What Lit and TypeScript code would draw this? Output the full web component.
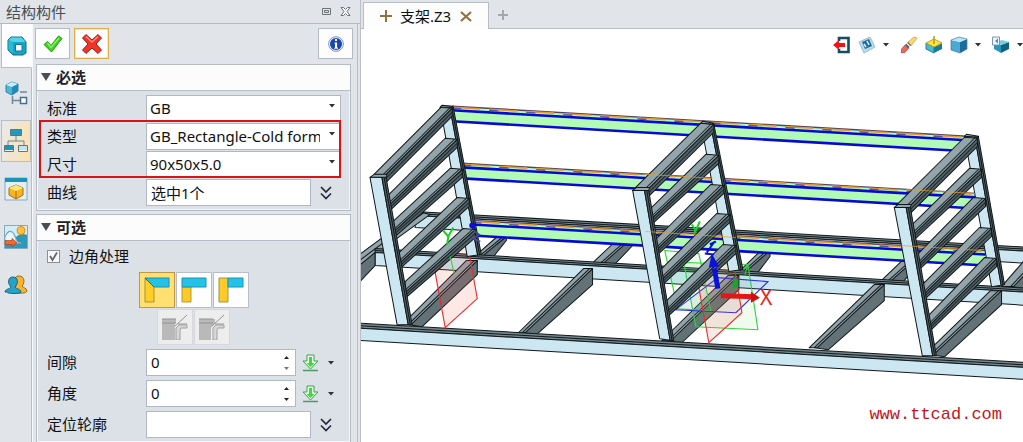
import { LitElement, html, css, svg } from "lit";
import { customElement, property, state } from "lit/decorators.js";
import { classMap } from "lit/directives/class-map.js";

type Pt = [number, number];

const pts = (list: Pt[]) => list.map((p) => p.join(",")).join(" ");
const mix = (a: Pt, b: Pt, t: number): Pt => [a[0] + (b[0] - a[0]) * t, a[1] + (b[1] - a[1]) * t];
const drop = (p: Pt, dy: number): Pt => [p[0], p[1] + dy];

/* ---------- icons ---------- */

const caret = html`<svg class="caret" width="6" height="4" viewBox="0 0 6 4"><path d="M0 0h6L3 3.5z" fill="#333" /></svg>`;
const triangle = html`<svg width="10" height="8" viewBox="0 0 10 8"><path d="M0 0h10L5 8z" fill="#4a4e54" /></svg>`;
const expand = html`<svg width="12" height="14" viewBox="0 0 12 14" fill="none" stroke="#222a38" stroke-width="1.7"><path d="M1 1l5 5 5-5M1 7.500l5 5 5-5" /></svg>`;

const railIcons = [
  html`<svg width="22" height="22" viewBox="0 0 22 22"><path d="M2 5l3-3h11l4 5v11l-3 2H7l-5-5z" fill="#16a3c4" stroke="#0b6f8e" stroke-linejoin="round" /><path d="M2.500 5l3-2.500h10L19.500 7H7z" fill="#57d3e8" /><path d="M2.500 5L7 7v12l-4.500-4.500z" fill="#2fb9d8" /><path d="M9.500 9.500h6.500v6.500H9.500z" fill="#fff" stroke="#0c7896" /></svg>`,
  html`<svg width="24" height="26" viewBox="0 0 24 26"><path d="M2 5l6-3 6 2v7l-6 4-6-3z" fill="#4eb5da" stroke="#3583a8" /><path d="M2 5l6-3 6 2-6 3z" fill="#c5eefa" /><path d="M8 7l6-3v7l-6 4z" fill="#2589b5" /><path d="M16 12h7M8.500 16v8M8.500 20.500h8" stroke="#71889b" stroke-width="1.500" fill="none" /><path d="M16.500 17.500h6v6h-6z" fill="#fff" stroke="#44718e" stroke-width="1.500" /></svg>`,
  html`<svg width="26" height="26" viewBox="0 0 26 26"><path d="M13 8v5M5 18v-5h16v5" stroke="#6d8394" fill="none" /><path d="M7.500 1.500h11v6h-11z" fill="#2797bc" stroke="#56788c" /><path d="M1.500 17.500h9v6h-9zM15.500 17.500h9v6h-9z" fill="#f5fbfd" stroke="#56788c" /><path d="M2 18h8v4H2z" fill="#1e93bb" /><path d="M16 18h8v4h-8z" fill="#bfe2ee" /></svg>`,
  html`<svg width="24" height="24" viewBox="0 0 24 24"><path d="M1 1h22v22H1z" fill="#dff0f7" stroke="#88a8bb" /><path d="M1 1h22v4H1z" fill="#1b93b8" /><path d="M5 11l7-3 7 3v7l-7 4-7-4z" fill="#f8b422" stroke="#b26b12" /><path d="M5 11l7-3 7 3-7 3z" fill="#ffe877" /><path d="M12 14v8" stroke="#b26b12" /></svg>`,
  html`<svg width="24" height="24" viewBox="0 0 24 24"><path d="M.5.5h23v23H.5z" fill="#d3edf7" stroke="#83a9bd" /><path d="M1 11c4-8 8-6 11 1 3-3 7-4 11-2v13H1z" fill="#2d98b7" /><path d="M1 12c4-8 8-6 10 0s4 6 6 6H1z" fill="#e8f7fb" stroke="#8bb5c8" /><circle cx="17" cy="5.500" r="4" fill="#ffc33a" stroke="#db8c1c" /><path d="M1 15.500h7v-2l5 4-5 4v-2H1z" fill="#ed6b33" stroke="#b5401a" stroke-width=".7" /></svg>`,
  html`<svg width="24" height="20" viewBox="0 0 24 20"><path d="M10 18c6 0 12 1 13-2 0-3-4-3-5-5 3-3 3-10-3-10-5 0-6 6-3 9z" fill="#fbb32c" stroke="#a7670e" /><path d="M1 17c0-3 5-3 6-5-4-4-3-10 2-10s6 6 2 10c1 2 6 2 6 5 0 2-14 2-14 0z" fill="#26a2c6" stroke="#126987" /></svg>`,
];

const check = html`<svg width="20" height="18" viewBox="0 0 20 18"><path d="M1 9.500l3.500-3 3.500 4L15.500 1 19 3.500 8.500 17z" fill="#3ed321" stroke="#229a10" stroke-linejoin="round" /><path d="M4.500 8l3.500 4.500L16 3" stroke="#8df271" stroke-width="1.300" fill="none" /></svg>`;
const cross = html`<svg width="22" height="22" viewBox="0 0 22 22"><path d="M5 1.500l6 5.500 6-5.500L20.500 5 15 11l5.500 6L17 20.500 11 15l-6 5.500L1.500 17 7 11 1.500 5z" fill="#ee3528" stroke="#a81a12" stroke-linejoin="round" /><path d="M5 3.500l6 5.500 6-5.500" stroke="#ff8c79" stroke-width="1.500" fill="none" /></svg>`;
const info = html`<svg width="16" height="16" viewBox="0 0 16 16"><circle cx="8" cy="8" r="7.400" fill="#e6edf9" stroke="#8b9ab9" /><circle cx="8" cy="8" r="6" fill="#1647b0" /><path d="M7 3h2v2H7zM6.500 6.500h2.600v5.300H10v1H6.200v-1H7V7.500h-.5z" fill="#fff" /></svg>`;
const download = html`<svg width="17" height="18" viewBox="0 0 17 18"><path d="M5 1h7v6h4l-7.500 8L1 7h4z" fill="#f0fff0" stroke="#3aa245" /><path d="M7 3h3v6h2.500l-4 4-4-4H7z" fill="#3cdb3c" /><path d="M1 16.500h15" stroke="#4b9b68" stroke-width="1.500" /></svg>`;

const corner = (kind: number) => html`<svg width="26" height="26" viewBox="0 0 26 26">
  ${kind === 0
    ? svg`<path d="M1 1l9 9v15H1z" fill="#ffce28" stroke="#a99332" /><path d="M1 1h24v9H10z" fill="#22c3e6" stroke="#1f91b0" /><path d="M1 1l9 9" stroke="#555" />`
    : kind === 1
      ? svg`<path d="M1 10h9v15H1z" fill="#ffc928" stroke="#b39b3c" /><path d="M1 1h24v9H1z" fill="#22c3e6" stroke="#1f91b0" />`
      : svg`<path d="M1 1h9v24H1z" fill="#ffc928" stroke="#8e9a4c" /><path d="M10 1h15v9H10z" fill="#22c3e6" stroke="#1f91b0" />`}
</svg>`;
const cope = (kind: number) => html`<svg width="26" height="26" viewBox="0 0 26 26"><path d="${kind ? "M0 5h16v4l-4 5v12H0z" : "M0 5h14v4h-1v17H0z"}" fill="#b9b9b9" /><path d="M0 5h14M0 9h14M13 12L25 1M16 10h9" stroke="#929292" fill="none" /><path d="M14 26V14l3-3h8v3h-6l-1 2v10z" fill="#d8d8d8" stroke="#a1a1a1" /></svg>`;

const toolIcons: { label: string; menu: boolean; icon: unknown }[] = [
  { label: "退出", menu: false, icon: html`<svg width="18" height="18" viewBox="0 0 18 18"><path d="M6 5V2h9.500v14H6v-3" stroke="#134d63" stroke-width="2.600" fill="none" /><path d="M0 9l6-5v3h6v4H6v3z" fill="#f01414" /></svg>` },
  { label: "平面", menu: true, icon: html`<svg width="18" height="18" viewBox="0 0 18 18"><path d="M1 6l11-5 5 10-11 6z" fill="#b9dcec" stroke="#9dbdce" /><path d="M4 6l7-3 3 7-7 3z" fill="#216d9e" /><path d="M6 8l2 3M9 5l2 4" stroke="#d5f0fa" stroke-width="1.500" /></svg>` },
  { label: "擦除", menu: false, icon: html`<svg width="18" height="18" viewBox="0 0 18 18"><path d="M8 6l6-5 3 1-6 8z" fill="#ffd667" stroke="#c59a39" stroke-width=".7" /><path d="M5 9l3-3 3 3-3 4z" fill="#555c64" /><path d="M6.500 7l4 4" stroke="#eee" stroke-width="1.500" /><path d="M1.500 13l3.500-4 3.500 3.500-3.500 4-3.500.5z" fill="#e46b60" stroke="#a9453d" stroke-width=".7" /></svg>` },
  { label: "基准面", menu: false, icon: html`<svg width="18" height="18" viewBox="0 0 18 18"><path d="M1 7l8 4v6l-8-4z" fill="#42bdd6" stroke="#257e9c" /><path d="M9 11l8-4v6l-8 4z" fill="#167b9b" /><path d="M1 7l8-4 8 4-8 4z" fill="#ffe536" stroke="#b7a235" /><path d="M9 0v8" stroke="#b49d1c" stroke-width="1.500" /></svg>` },
  { label: "着色", menu: true, icon: html`<svg width="18" height="18" viewBox="0 0 18 18"><path d="M1 4l9 2v11l-9-3z" fill="#4ba8d2" /><path d="M10 6l7-3v10l-7 4z" fill="#1b6c9b" /><path d="M1 4l8-3 8 2-7 3z" fill="#b6e5f5" /><path d="M1 4l8-3 8 2v10l-7 4-9-3z" fill="none" stroke="#397f9f" stroke-width=".7" /></svg>` },
  { label: "视图", menu: true, icon: html`<svg width="18" height="18" viewBox="0 0 18 18"><path d="M2 6l7 3v8l-7-4z" fill="#2797ba" /><path d="M9 9l8-3v7l-8 4z" fill="#0f6382" /><path d="M4 6l6-2 7 2-8 3z" fill="#72cfe1" /><path d="M.5 1h7v8h-7z" fill="#eef6fa" stroke="#7998b0" /><path d="M6 2.500L3 5l3 2.500z" fill="#5a87aa" /></svg>` },
];

/* ---------- model geometry ---------- */

interface Frame {
  front: { tl: Pt; tr: Pt; br: Pt; bl: Pt };
  back: { tl: Pt; tr: Pt; br: Pt; bl: Pt };
  bars: { far: Pt; near: Pt; w: number; cap: boolean }[];
}

const frames: Frame[] = [
  {
    front: { tl: [370, 177], tr: [386, 177], br: [412, 324], bl: [397, 324] },
    back: { tl: [440, 107], tr: [453, 107], br: [481, 254], bl: [467, 256] },
    bars: [
      { far: [441, 107], near: [374, 174], w: 11, cap: true },
      { far: [445, 138], near: [388, 195], w: 12, cap: false },
      { far: [450, 168], near: [393, 221], w: 12, cap: false },
      { far: [457, 197], near: [399, 252], w: 12, cap: false },
      { far: [463, 228], near: [405, 281], w: 12, cap: false },
    ],
  },
  {
    front: { tl: [632, 190], tr: [648, 190], br: [673, 340], bl: [659, 338] },
    back: { tl: [700, 123], tr: [713, 124], br: [742, 269], bl: [728, 271] },
    bars: [
      { far: [700, 123], near: [634, 188], w: 13, cap: true },
      { far: [705, 154], near: [649, 209], w: 13, cap: false },
      { far: [710, 184], near: [655, 239], w: 13, cap: false },
      { far: [716, 213], near: [660, 269], w: 13, cap: false },
      { far: [722, 244], near: [666, 300], w: 13, cap: false },
    ],
  },
  {
    front: { tl: [893, 207], tr: [909, 207], br: [935, 355], bl: [921, 355] },
    back: { tl: [963, 136], tr: [977, 137], br: [1003, 284], bl: [990, 286] },
    bars: [
      { far: [963, 137], near: [895, 205], w: 13, cap: true },
      { far: [968, 168], near: [910, 225], w: 12, cap: false },
      { far: [972, 197], near: [916, 254], w: 12, cap: false },
      { far: [978, 227], near: [921, 284], w: 12, cap: false },
      { far: [983, 257], near: [927, 315], w: 12, cap: false },
    ],
  },
];

const post = (p: Frame["front"]) => {
  const a = mix(p.tl, p.tr, 0.74);
  const b = mix(p.bl, p.br, 0.74);
  const c = mix(p.tl, p.tr, 0.88);
  const d = mix(p.bl, p.br, 0.88);
  return svg`
    <polygon class="face" points=${pts([p.tl, a, b, p.bl])} />
    <polygon class="dark" points=${pts([a, p.tr, p.br, b])} />
    <path class="edge" d="M${c}L${d}" />`;
};

/* A capping bar rests on top of the front post; the others end behind it. */
const bar = ({ far, near, w, cap }: Frame["bars"][number]) => {
  const farR: Pt = [far[0] + w, far[1] + 1];
  const end: Pt = cap ? [near[0] + w, near[1] + 1] : [near[0] + 1, near[1] + 10];
  const low: Pt = cap ? [end[0] + 2, end[1] + 6] : [near[0] + 2, near[1] + 15];
  return svg`
    <polygon class="dark" points=${pts([farR, drop(farR, 8), low, end])} />
    <polygon class="top" points=${pts([far, farR, end, near])} />
    <path class="line" d="M${mix(far, farR, 0.78)}L${mix(near, end, 0.78)}" />
    <path class="line" d="M${drop(farR, 4)}L${mix(end, low, 0.5)}" />`;
};

const frameShape = (f: Frame) => svg`
  ${post(f.back)}
  ${f.bars.map(bar)}
  ${post(f.front)}
  <polygon class="top" points=${pts([f.front.tl, [f.front.tl[0] + 4, f.front.tl[1] - 3], [f.front.tr[0] + 1, f.front.tr[1] - 3], f.front.tr])} />
  <polygon class="top" points=${pts([f.back.tl, [f.back.tl[0] + 2, f.back.tl[1] - 2], [f.back.tr[0], f.back.tr[1] - 1], f.back.tr])} />`;

const rail = (a: Pt, b: Pt, top: number, height: number) => svg`
  <polygon class="side" points=${pts([a, b, drop(b, top), drop(a, top)])} />
  <path class="edge" d="M${drop(a, top / 2)}L${drop(b, top / 2)}" />
  <polygon class="face" points=${pts([drop(a, top), drop(b, top), drop(b, height), drop(a, height)])} />`;

const crossMember = (far: Pt, near: Pt, w: number, h: number) => svg`
  <polygon class="deep" points=${pts([[far[0] + w, far[1]], [far[0] + w, far[1] + h], [near[0] + w + 9, near[1] + 2], [near[0] + w - 4, near[1]]])} />
  <polygon class="top" points=${pts([far, [far[0] + w, far[1]], [near[0] + w - 2, near[1]], near])} />
  <path class="edge" d="M${[far[0] + w - 3, far[1]]}L${[near[0] + w - 5, near[1]]}" />`;

const beam = (a: Pt, b: Pt) => svg`
  <polygon class="pick" points=${pts([a, b, drop(b, 15), drop(a, 15)])} />
  <path class="pick-back" d="M${a}L${b}" />
  <path class="pick-orange" d="M${drop(a, 1)}L${drop(b, 1)}" />
  <path class="pick-edge" d="M${drop(a, 4)}L${drop(b, 4)}" />
  <path class="pick-shade" d="M${drop(a, 2)}L${drop(b, 2)}" />
  <path class="pick-edge" d="M${drop(a, 15)}L${drop(b, 15)}" />`;

@customElement("model-scene")
export class ModelScene extends LitElement {
  static styles = css`
    :host { display: block; overflow: hidden; }
    .scene { display: block; width: 100%; height: 100%; }
    .face, .top, .side, .dark, .deep { stroke: #10181b; stroke-width: 1; stroke-linejoin: round; }
    .face { fill: #cce7f2; }
    .top { fill: #93a4aa; }
    .side { fill: #75868c; }
    .dark { fill: #536267; }
    .deep { fill: #637277; }
    .edge { stroke: #10181b; fill: none; }
    .line { stroke: #1c282c; fill: none; }
    .pick { fill: #b2fbb5; }
    .pick-back { stroke: #5b405c; stroke-width: 1.4; }
    .pick-orange { stroke: #e59a2c; stroke-width: 1.6; stroke-dasharray: 28 9; }
    .pick-shade { stroke: #555b8b; stroke-width: 1.5; stroke-dasharray: 9 28; }
    .pick-edge { stroke: #0808d8; stroke-width: 2.6; }
    .ghost { stroke: #e3a02e; stroke-width: 1; opacity: 0.7; }
    .plane { stroke-width: 1.1; }
    .red { stroke: #ec2a2a; fill: rgba(245, 90, 80, 0.14); }
    .green { stroke: #2fd53a; fill: rgba(90, 220, 90, 0.1); }
    .blue { stroke: #2c2ce0; fill: rgba(80, 80, 240, 0.05); }
    .axis { font: 21px "Noto Sans", sans-serif; }
    .axis-x { fill: #ee1c1c; }
    .ink-green { stroke: #12d81c; stroke-width: 2; fill: none; }
    .ink-blue { stroke: #0d0ddf; stroke-width: 2; fill: none; }
  `;

  render() {
    return html`<svg class="scene" viewBox="361 29 662 413" preserveAspectRatio="xMinYMin slice" role="img" aria-label="支架">
      ${rail([415, 211], [1030, 247], 4, 16)}
      <polygon class="top" points="418,211 358,255 358,266 430,214" />
      <path class="edge" d="M424 212L358 261" />
      ${crossMember([497, 236], [472, 258], 9, 4)}
      ${crossMember([620, 236], [588, 266], 13, 8)}
      ${crossMember([760, 250], [738, 271], 9, 6)}
      ${crossMember([905, 256], [880, 280], 12, 8)}
      ${crossMember([1026, 256], [1000, 286], 14, 12)}
      ${rail([375, 248], [1030, 288], 4, 17)}
      <polygon class="deep" points="358,266 375,252 375,265 358,283" />
      ${crossMember([583, 268], [518, 332], 9, 16)}
      ${crossMember([873, 284], [808, 347], 10, 16)}
      ${crossMember([466, 260], [402, 324], 11, 14)}
      ${crossMember([727, 275], [661, 340], 11, 14)}
      ${crossMember([989, 290], [923, 354], 11, 14)}
      ${rail([350, 322], [1030, 362], 5, 17)}
      ${beam([452, 106], [965, 136])}
      ${beam([462, 163], [974, 193])}
      ${beam([472, 220], [984, 250])}
      <polygon class="plane red" points="467,242 477,298 445,327 435,272" />
      <polygon class="plane green" points="683,262 747,264 757,329 695,326" />
      <polygon class="plane green" points="664,250 698,253 710,310 677,308" />
      <polygon class="plane blue" points="717,277 767,281 735,312 675,309" />
      <polygon class="plane red" points="731,252 741,312 708,342 698,287" />
      ${frames.map(frameShape)}
      <path class="ghost" d="M643 174L712 178M645 231L735 237M905 189L974 193M900 245L980 250" />
      <path class="ink-green" d="M443 230l5 6 5-9M448 236l-1 8M691 224l4 6 4-9M695 230l-2 3" />
      <path class="plane green" d="M450 256l4 17" />
      <circle cx="472" cy="225" r="3" fill="#0d0ddf" />
      <path d="M473 230l6 4-6 4 7 3" fill="none" stroke="#4a4aa8" stroke-width="1.500" />
      <path class="ink-blue" d="M709 244l6-3M704 253l9 1M706 252l7-10" />
      <path d="M717 288L713.500 268" stroke="#0c10dd" stroke-width="5" />
      <path d="M708 267l3-14 7 13z" fill="#0c10dd" />
      <path d="M731 288l2-11 4 2v8z" fill="#18a72b" />
      <path d="M720 295l34 1" stroke="#e01818" stroke-width="5" />
      <path d="M750 291l9 6-9 5z" fill="#cf1010" />
      <path d="M744 274l3-10" stroke="#2fd53a" />
      <text class="axis axis-x" x="759" y="304">X</text>
    </svg>`;
  }
}

@customElement("option-group")
export class OptionGroup extends LitElement {
  @property() heading = "";

  static styles = css`
    :host { display: block; border: 1px solid #b4bcc5; background: #dce1e8; box-shadow: inset 0 0 0 1px #f3f5f7; }
    .head { display: flex; align-items: center; gap: 5px; width: 100%; height: 26px; padding: 0 4px 2px; border: 0; border-bottom: 1px solid #b4bcc5; background: #fcfcfd; color: #222; font: bold 15px/20px "Noto Sans", "Noto Sans CJK SC", sans-serif; }
  `;

  render() {
    return html`<button class="head" type="button" aria-expanded="true">${triangle}<span>${this.heading}</span></button><slot></slot>`;
  }
}

@customElement("app-root")
export class AppRoot extends LitElement {
  @state() private joint = 0;

  static styles = css`
    :host { display: block; font: 15px/20px "Noto Sans", "Noto Sans CJK SC", sans-serif; color: #111; }
    * { box-sizing: border-box; }
    svg { display: block; flex: none; }
    button { font: inherit; color: inherit; padding: 0; margin: 0; }
    .shell { display: flex; min-height: 100vh; background: #e1e5e9; }
    .dock { flex: none; width: 361px; display: flex; flex-direction: column; border-right: 1px solid #b9bfc6; }
    .title { display: flex; align-items: center; gap: 9px; height: 24px; padding: 0 9px 0 6px; border-bottom: 1px solid #b4bac1; color: #484d52; }
    .title h1 { flex: 1; margin: 0; font: inherit; }
    .plain { display: flex; align-items: center; justify-content: center; border: 0; background: none; }
    .dock-body { flex: 1; display: flex; padding-left: 1px; }
    .rail { width: 31px; flex: none; display: flex; flex-direction: column; gap: 6px; border-right: 1px solid #b8bec5; }
    .rail-item { display: flex; align-items: center; justify-content: center; width: 30px; height: 42px; border: 1px solid transparent; background: none; }
    .rail-item.current { width: 31px; height: 44px; background: #fdfdfd; border-color: #b8bec5; border-right-color: #fdfdfd; border-top: 0; margin-bottom: -2px; }
    .rail-item.hot { background: linear-gradient(100deg, #e8eaea, #fbe2ad); border-color: #b8bec5; }
    .content { flex: 1; min-width: 0; padding: 4px 4px 0 3px; border-right: 1px solid #b8bec5; margin-right: 2px; box-shadow: inset 1px 0 #f7f8f9; }
    .actions { display: flex; gap: 4px; margin-bottom: 5px; }
    .action { display: flex; align-items: center; justify-content: center; width: 35px; height: 31px; border: 1px solid #b4bac4; background: #fdfdfe; }
    .action.focus { border-color: #dfae4a; box-shadow: inset 0 0 0 1px #fae6bb; }
    .action.info { margin-left: auto; }
    .groups { display: flex; flex-direction: column; gap: 3px; margin: 0 2px 0 1px; }
    .form { display: flex; flex-direction: column; padding: 4px 9px 4px 10px; gap: 1px; }
    .form.loose { gap: 4px; padding-top: 3px; }
    .row { display: grid; grid-template-columns: 99px 1fr; align-items: center; height: 27px; }
    .row label { padding-bottom: 2px; }
    .field { position: relative; display: flex; align-items: center; min-width: 0; }
    .box { width: 100%; min-width: 0; height: 27px; padding: 0 4px 1px; border: 1px solid #b0b9c3; border-radius: 0; background: #fff; color: #111; font: inherit; appearance: none; outline: 0; }
    select.box { padding: 0 20px 2px 3px; }
    .field > .caret { position: absolute; right: 6px; top: 9px; pointer-events: none; }
    .with-more { display: grid; grid-template-columns: 1fr 30px; align-items: center; }
    .marked { position: relative; display: flex; flex-direction: column; gap: 1px; }
    .marked::after { content: ""; position: absolute; inset: -3px 0 0 -8px; border: 2px solid #d81419; pointer-events: none; }
    .tick-row { display: flex; align-items: center; gap: 9px; height: 24px; }
    .tick { appearance: none; width: 13px; height: 13px; margin: 0; border: 1px solid #8b9098; background: #f6f7f8 url("data:image/svg+xml,%3Csvg xmlns='http://www.w3.org/2000/svg' viewBox='0 0 11 11'%3E%3Cpath d='M2 5l2.500 4L9 1.500' fill='none' stroke='%23666' stroke-width='1.800'/%3E%3C/svg%3E"); }
    .toggles { display: flex; flex-direction: column; gap: 1px; align-items: center; padding-right: 1px; }
    .toggle-line { display: flex; gap: 1px; }
    .toggle { display: flex; align-items: center; justify-content: center; width: 36px; height: 36px; border: 1px solid #b7bec8; background: #fefefe; }
    .toggle.on { background: #ffe070; border-color: #bd9849; }
    .toggle:disabled { background: #ededee; border-color: #d5d8dc; }
    .num { display: grid; grid-template-columns: 150px 1fr; align-items: center; gap: 6px; }
    .spin { position: absolute; right: 7px; display: flex; flex-direction: column; gap: 8px; }
    .fetch { justify-content: flex-start; gap: 9px; }
    .stage { flex: 1; min-width: 0; display: flex; flex-direction: column; background: #fff; }
    .tabs { display: flex; align-items: flex-end; height: 29px; padding-left: 2px; background: #e1e5e9; box-shadow: inset 0 -1px #b7bdc4; }
    .tab { display: flex; align-items: center; gap: 8px; height: 27px; width: 126px; padding: 0 16px; border: 1px solid #b7bdc4; border-bottom: 0; background: #fdfdfe; }
    .tab-name { flex: 1; white-space: nowrap; }
    .add { height: 29px; padding: 0 9px; }
    .canvas { position: relative; flex: 1; display: grid; min-height: 0; }
    .tools { position: absolute; top: 7px; right: 0; display: flex; align-items: center; gap: 7px; }
    .tool { display: flex; align-items: center; gap: 7px; height: 18px; border: 0; background: none; }
    .tool.menu { margin-right: 4px; }
    .tool.menu:last-child { margin-right: 0; }
    .site { position: absolute; right: 21px; bottom: 18px; color: #c3141c; font: 17px/20px "Liberation Mono", monospace; text-decoration: none; }
  `;

  private select(id: string, label: string, value: string) {
    return html`<div class="row"><label for=${id}>${label}</label>
      <div class="field"><select class="box" id=${id}><option>${value}</option></select>${caret}</div></div>`;
  }

  private picker(id: string, label: string, value: string) {
    return html`<div class="row"><label for=${id}>${label}</label>
      <div class="with-more"><input class="box" id=${id} .value=${value} /><button class="plain" type="button" aria-label="展开">${expand}</button></div></div>`;
  }

  private spinner(id: string, label: string, up: string, down: string) {
    return html`<div class="row"><label for=${id}>${label}</label>
      <div class="num"><div class="field"><input class="box" id=${id} .value=${"0"} inputmode="numeric" />
        <div class="spin"><svg width="5" height="3" viewBox="0 0 5 3"><path d="M0 3h5L2.500 0z" fill=${up} /></svg><svg width="5" height="3" viewBox="0 0 5 3"><path d="M0 0h5L2.500 3z" fill=${down} /></svg></div></div>
        <button class="plain fetch" type="button" aria-label="获取">${download}${caret}</button></div></div>`;
  }

  render() {
    return html`<div class="shell">
      <aside class="dock">
        <header class="title">
          <h1>结构构件</h1>
          <button class="plain" type="button" aria-label="还原"><svg width="9" height="7" viewBox="0 0 9 7" fill="none" stroke="#6d7276"><path d="M.5.5h8v6h-8zM2.500 2.500h4v2h-4z" /></svg></button>
          <button class="plain" type="button" aria-label="关闭"><svg width="11" height="9" viewBox="0 0 11 9"><path d="M1 .5h2.500l2 2 2-2H10l-3 4 3 4H7.500l-2-2-2 2H1l3-4z" fill="#fff" stroke="#6d7276" /></svg></button>
        </header>
        <div class="dock-body">
          <nav class="rail">
            ${railIcons.map((icon, i) => html`<button type="button" aria-label="面板 ${i + 1}" class=${classMap({ "rail-item": true, current: i === 0, hot: i === 2 })}>${icon}</button>`)}
          </nav>
          <div class="content">
            <div class="actions">
              <button class="action" type="button" aria-label="确定">${check}</button>
              <button class="action focus" type="button" aria-label="取消">${cross}</button>
              <button class="action info" type="button" aria-label="信息">${info}</button>
            </div>
            <div class="groups">
              <option-group heading="必选">
                <div class="form">
                  ${this.select("standard", "标准", "GB")}
                  <div class="marked">
                    ${this.select("type", "类型", "GB_Rectangle-Cold formed")}
                    ${this.select("size", "尺寸", "90x50x5.0")}
                  </div>
                  ${this.picker("curve", "曲线", "选中1个")}
                </div>
              </option-group>
              <option-group heading="可选">
                <div class="form loose">
                  <div class="tick-row"><input class="tick" type="checkbox" id="corner" checked /><label for="corner">边角处理</label></div>
                  <div class="toggles">
                    <div class="toggle-line">
                      ${[0, 1, 2].map((k) => html`<button type="button" aria-label="边角 ${k + 1}" aria-pressed=${this.joint === k} class=${classMap({ toggle: true, on: this.joint === k })} @click=${() => (this.joint = k)}>${corner(k)}</button>`)}
                    </div>
                    <div class="toggle-line">
                      ${[0, 1].map((k) => html`<button class="toggle" type="button" aria-label="切口 ${k + 1}" disabled>${cope(k)}</button>`)}
                    </div>
                  </div>
                  ${this.spinner("gap", "间隙", "#222", "#777")}
                  ${this.spinner("angle", "角度", "#222", "#222")}
                  ${this.picker("profile", "定位轮廓", "")}
                </div>
              </option-group>
            </div>
          </div>
        </div>
      </aside>
      <main class="stage">
        <div class="tabs">
          <div class="tab">
            <svg width="12" height="12" viewBox="0 0 12 12"><path d="M6 0v12M0 6h12" stroke="#8c7440" stroke-width="2" /></svg>
            <span class="tab-name">支架.Z3</span>
            <button class="plain" type="button" aria-label="关闭标签"><svg width="12" height="11" viewBox="0 0 12 11"><path d="M1 1l10 9M11 1L1 10" stroke="#8c7440" stroke-width="2.200" /></svg></button>
          </div>
          <button class="plain add" type="button" aria-label="新建标签"><svg width="10" height="10" viewBox="0 0 10 10"><path d="M5 0v10M0 5h10" stroke="#a5a8ab" stroke-width="2" /></svg></button>
        </div>
        <div class="canvas">
          <model-scene></model-scene>
          <div class="tools">
            ${toolIcons.map((t) => html`<button type="button" aria-label=${t.label} class=${classMap({ tool: true, menu: t.menu })}>${t.icon}${t.menu ? caret : ""}</button>`)}
          </div>
          <a class="site" href="#site">www.ttcad.com</a>
        </div>
      </main>
    </div>`;
  }
}
